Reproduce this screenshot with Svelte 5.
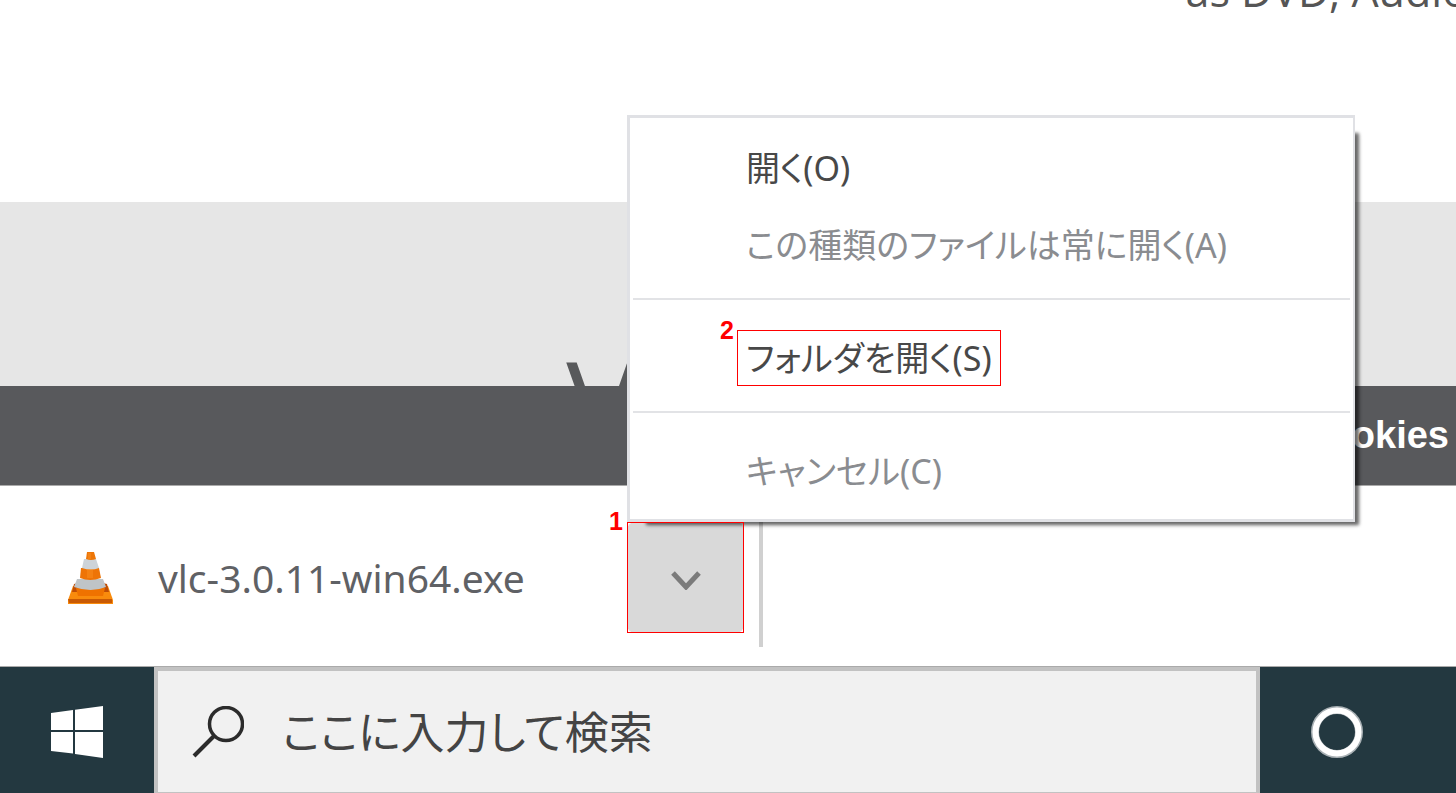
<script lang="ts">
	type MenuItem = {
		label: string;
		disabled?: boolean;
		// number of the walkthrough step that points at this entry
		step?: number;
	};

	const groups: MenuItem[][] = [
		[{ label: '開く(O)' }, { label: 'この種類のファイルは常に開く(A)', disabled: true }],
		[{ label: 'フォルダを開く(S)', step: 2 }],
		[{ label: 'キャンセル(C)', disabled: true }]
	];

	let open = $state(true);
	let query = $state('');
</script>

<div class="screen">
	<main class="page">
		<section class="intro">
			<p>as DVD, Audio</p>
		</section>
		<section class="hero">
			<h1>V</h1>
		</section>
		<div class="cookie-bar">
			<strong>okies</strong>
		</div>
	</main>

	<section class="downloads">
		<a class="file" href="#download">
			<svg class="cone" viewBox="0 0 45 53" aria-hidden="true">
				<path d="M5 35h35l5 14v4H0v-4z" fill="#f98b0c" />
				<path d="M6 33l4-1-1 9h-5zM39 33l-4-1 1 9h5z" fill="#bf4d05" />
				<path d="M8 37h29l-2 8H10z" fill="#ef7200" />
				<path d="M0 48h44v4H1z" fill="#c95a04" />
				<path d="M9 28h26l3 8q-15 6-32 0z" fill="#bfc4c7" />
				<path d="M13 17h18l2 10q-11 4-21 0z" fill="#ee7406" />
				<path d="M16 8h12l3 9q-8 3-17 0z" fill="#cdd3d8" />
				<path d="M19 1h7l2 7q-5 2-10 0z" fill="#ed7608" />
				<path d="M19 18h6v9h-6zM20 2h3v6h-3z" fill="#ff9a2a" opacity="0.35" />
			</svg>
			<span>vlc-3.0.11-win64.exe</span>
		</a>

		<div class="menu-anchor">
			<button
				class="toggle"
				aria-label="menu"
				aria-expanded={open}
				onclick={() => (open = !open)}
			>
				<svg viewBox="0 0 30 20" aria-hidden="true">
					<path d="M2 3l13 14L28 3" fill="none" stroke="#7b7b7b" stroke-width="5" />
				</svg>
			</button>
			<span class="step">1</span>

			{#if open}
				<div class="menu" role="menu">
					{#each groups as group, i}
						{#if i > 0}
							<hr />
						{/if}
						{#each group as item}
							<button class="item" role="menuitem" disabled={item.disabled}>
								<span class="label" class:marked={item.step}>
									{item.label}
									{#if item.step}
										<span class="step">{item.step}</span>
									{/if}
								</span>
							</button>
						{/each}
					{/each}
				</div>
			{/if}
		</div>
		<div class="divider"></div>
	</section>

	<footer class="taskbar">
		<button class="task" aria-label="start">
			<svg class="task-icon" viewBox="0 0 52 52" aria-hidden="true">
				<path
					d="M0 7l22-3v20H0zM24 3.700L52 0v24H24zM0 26h22v21.500L0 45zM24 26h28v26l-28-4z"
					fill="#fff"
				/>
			</svg>
		</button>
		<label class="search">
			<svg class="task-icon" viewBox="0 0 52 52" aria-hidden="true">
				<g fill="none" stroke="#2b2b2b" stroke-width="3.500">
					<circle cx="34" cy="18" r="16.500" />
					<path d="M22 30L2 50" stroke-width="4" />
				</g>
			</svg>
			<input type="text" aria-label="search" placeholder="ここに入力して検索" bind:value={query} />
		</label>
		<button class="task" aria-label="cortana">
			<svg class="task-icon" viewBox="0 0 52 52" aria-hidden="true">
				<circle cx="26" cy="26" r="22" fill="none" stroke="#a9b1b5" stroke-width="8" />
				<circle cx="26" cy="26" r="21.500" fill="none" stroke="#fff" stroke-width="6" />
			</svg>
		</button>
	</footer>
</div>

<style>
	:global(body) {
		margin: 0;
		background: #fff;
	}

	.screen {
		display: flex;
		flex-direction: column;
		min-height: 100vh;
		overflow: hidden;
		font-family: 'Noto Sans', 'Noto Sans CJK JP', sans-serif;
		font-feature-settings: 'palt';
	}

	button {
		padding: 0;
		border: 0;
		font: inherit;
		font-feature-settings: inherit;
	}

	.page {
		display: flex;
		flex-direction: column;
		flex: 1;
	}

	.intro {
		display: flex;
		justify-content: flex-end;
		flex: 1;
		overflow: hidden;
	}

	.intro p {
		margin: -39px -12px 0 0;
		color: #555;
		font-family: 'Open Sans', sans-serif;
		font-size: 43px;
		line-height: 60px;
		white-space: nowrap;
	}

	.hero {
		height: 184px;
		overflow: hidden;
		background: #e6e6e6;
	}

	.hero h1 {
		margin: 137px 252px 0 0;
		color: #58595b;
		font-family: 'Open Sans', sans-serif;
		font-size: 120px;
		font-weight: 400;
		line-height: 128px;
		text-align: center;
	}

	.cookie-bar {
		padding: 24px 7px 24px 0;
		border-bottom: 1px solid #aaa;
		background: #58595c;
		color: #fff;
		font-family: 'Liberation Sans', sans-serif;
		font-size: 38px;
		line-height: 51px;
		text-align: right;
	}

	.downloads {
		display: flex;
		padding: 36px 0 19px;
		background: #fff;
	}

	.file {
		display: flex;
		align-items: center;
		box-sizing: border-box;
		width: 627px;
		height: 111px;
		gap: 45px;
		padding-left: 68px;
		color: #5f6165;
		font-size: 39px;
		text-decoration: none;
		white-space: nowrap;
	}

	.cone {
		width: 45px;
		height: 53px;
	}

	.menu-anchor {
		position: relative;
		z-index: 1;
		height: 111px;
	}

	/* red frame, kept above the menu's shadow */
	.menu-anchor::after {
		content: '';
		position: absolute;
		inset: 0;
		border: 1px solid #f00;
		pointer-events: none;
	}

	.toggle {
		display: grid;
		place-items: center;
		width: 117px;
		height: 111px;
		padding-top: 4px;
		border-radius: 8px;
		background: #d9d9d9;
	}

	.toggle svg {
		width: 30px;
		height: 20px;
	}

	.step {
		position: absolute;
		top: -15px;
		right: 100%;
		margin-right: 4px;
		color: #f00;
		font-family: 'Liberation Sans', sans-serif;
		font-size: 25px;
		font-weight: 700;
		line-height: 28px;
	}

	.menu {
		position: absolute;
		bottom: 100%;
		left: 0;
		box-sizing: border-box;
		width: 728px;
		padding: 11px 3px 10px;
		border: 3px solid #e0e1e5;
		border-right-width: 2px;
		background: #fff;
	}

	/* the drop shadow starts well below the top right corner */
	.menu::after {
		content: '';
		position: absolute;
		inset: 14px -2px -3px 14px;
		box-shadow:
			3px 2px 3px 1px rgba(0, 0, 0, 0.5),
			3px 3px 5px rgba(0, 0, 0, 0.2);
		clip-path: polygon(
			100% -8px,
			calc(100% + 16px) -8px,
			calc(100% + 16px) calc(100% + 16px),
			-8px calc(100% + 16px),
			-8px 100%,
			100% 100%
		);
		pointer-events: none;
	}

	.item {
		display: flex;
		align-items: center;
		width: 100%;
		height: 77px;
		padding-left: 104px;
		background: none;
		color: #484848;
		font-size: 34px;
		line-height: 54px;
		text-align: left;
		white-space: nowrap;
	}

	.item:disabled {
		color: #8a8c90;
	}

	.label {
		position: relative;
		padding: 0 8px;
		border: 1px solid transparent;
	}

	.marked {
		border-color: #f00;
	}

	hr {
		height: 2px;
		margin: 15px 0 19px;
		border: 0;
		background: #e2e3e6;
	}

	.divider {
		width: 4px;
		height: 125px;
		margin-left: 15px;
		background: #d0d0d0;
	}

	.taskbar {
		display: flex;
		box-sizing: border-box;
		height: 127px;
		padding-right: 42px;
		border-top: 1px solid #aaa;
		background: #233840;
	}

	.task {
		display: grid;
		place-items: center;
		width: 154px;
		padding-top: 3px;
		background: none;
	}

	.task-icon {
		flex: none;
		width: 52px;
		height: 52px;
	}

	.search {
		display: flex;
		align-items: center;
		flex: 1;
		gap: 38px;
		padding-left: 34px;
		border: 4px solid #c2c2c2;
		border-bottom-width: 1px;
		background: #f1f1f1;
	}

	.search input {
		flex: 1;
		min-width: 0;
		padding: 0;
		border: 0;
		outline: 0;
		background: none;
		font: inherit;
		font-size: 44px;
		font-feature-settings: inherit;
	}

	.search input::placeholder {
		color: #444;
		opacity: 1;
	}
</style>
